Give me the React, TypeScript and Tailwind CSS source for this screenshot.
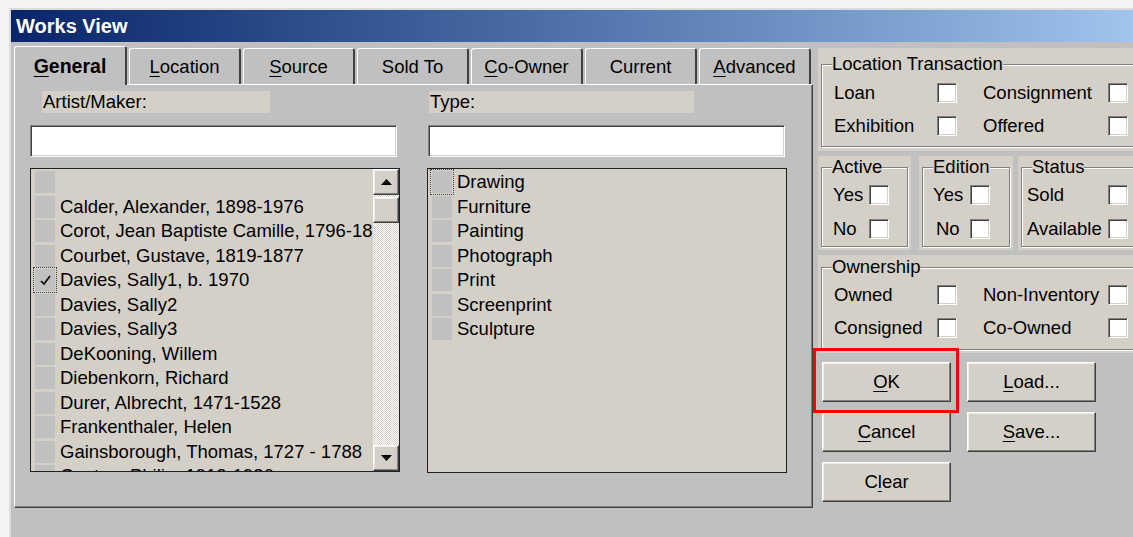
import React from "react";

// text with one underlined access-key letter
function Mn({ text, at }: { text: string; at?: number }) {
  if (at === undefined) return <>{text}</>;
  return (
    <>
      {text.slice(0, at)}
      <span className="underline underline-offset-[3px]">{text[at]}</span>
      {text.slice(at + 1)}
    </>
  );
}

const tabs = [
  { label: "Location", key: 0 },
  { label: "Source", key: 0 },
  { label: "Sold To" },
  { label: "Co-Owner", key: 0 },
  { label: "Current" },
  { label: "Advanced", key: 0 },
];

const artists = [
  "",
  "Calder, Alexander, 1898-1976",
  "Corot, Jean Baptiste Camille, 1796-1875",
  "Courbet, Gustave, 1819-1877",
  "Davies, Sally1, b. 1970",
  "Davies, Sally2",
  "Davies, Sally3",
  "DeKooning, Willem",
  "Diebenkorn, Richard",
  "Durer, Albrecht, 1471-1528",
  "Frankenthaler, Helen",
  "Gainsborough, Thomas, 1727 - 1788",
  "Guston, Philip, 1913-1980",
];

const types = ["Drawing", "Furniture", "Painting", "Photograph", "Print", "Screenprint", "Sculpture"];

function CheckBox() {
  return (
    <span className="block w-[20px] h-[20px] shrink-0 bg-white border border-t-[#808080] border-l-[#808080] border-r-white border-b-white shadow-[inset_1px_1px_0_#404040,inset_-1px_-1px_0_#d4d0c8]" />
  );
}

function Group({
  title,
  height,
  inner,
  children,
}: {
  title: string;
  height: string;
  inner: string;
  children: React.ReactNode;
}) {
  return (
    <fieldset className={"border border-[#808080] shadow-[inset_1px_1px_0_#fff,1px_1px_0_#fff] " + height}>
      <legend className="ml-[10px] px-0 leading-[20px] bg-[#d4d0c8]">{title}</legend>
      <div className={inner}>{children}</div>
    </fieldset>
  );
}

function ListCell({ focus, checked }: { focus?: boolean; checked?: boolean }) {
  return (
    <span
      className={
        "flex items-center justify-center w-[20px] h-[22px] shrink-0 bg-[#c0c0c0] " +
        (focus ? "outline-1 outline-dotted outline-[#404040] outline-offset-[1px]" : "")
      }
    >
      {checked && (
        <svg width="13" height="13" viewBox="0 0 13 13">
          <path d="M2 7 L5 10 L11 2" stroke="#000" strokeWidth="1.6" fill="none" />
        </svg>
      )}
    </span>
  );
}

function Arrow({ up }: { up?: boolean }) {
  return (
    <svg width="11" height="7" viewBox="0 0 11 7">
      <polygon points={up ? "5.5,0 11,6 0,6" : "0,0 11,0 5.5,6"} fill="#000" />
    </svg>
  );
}

const raised =
  "bg-[#d4d0c8] border border-t-white border-l-white border-r-[#404040] border-b-[#404040] shadow-[inset_-1px_-1px_0_#808080,inset_1px_1px_0_#ececec]";

function Button({ text, at }: { text: string; at: number }) {
  return (
    <button className={"w-[129px] h-[40px] flex items-center justify-center text-[18.5px] text-black " + raised}>
      <Mn text={text} at={at} />
    </button>
  );
}

function CheckRow({ a, b }: { a: string; b: string }) {
  return (
    <div className="flex items-center h-[33px]">
      <span className="w-[103px]">{a}</span>
      <CheckBox />
      <span className="w-[125px] ml-[26px]">{b}</span>
      <CheckBox />
    </div>
  );
}

export default function App() {
  return (
    <div className="w-[1133px] h-[537px] overflow-hidden bg-[#f4f4f4] pt-[8px] pl-[9px] font-['Liberation_Sans',Arial,sans-serif] text-[18.5px] text-black">
      <div className="w-[1160px] h-[540px] bg-[#c0c0c0] border-t-2 border-l-2 border-[#dcdcdc]">
        {/* caption */}
        <div className="h-[32px] flex items-center pl-[5px] bg-gradient-to-r from-[#0a246a] to-[#a6caf0] text-white font-bold text-[20px]">
          Works View
        </div>

        <div className="flex">
          {/* tab control */}
          <div className="ml-[3px] w-[799px]">
            <div className="h-[42px] flex items-end">
              <div className="relative z-10 -mb-px w-[113px] h-[39px] flex items-center justify-center pt-[2px] font-bold text-[19.5px] bg-[#c0c0c0] border-t border-l border-white border-r-2 border-r-[#404040] rounded-t-[3px]">
                <Mn text="General" at={0} />
              </div>
              {tabs.map((t) => (
                <div
                  key={t.label}
                  className="ml-[2px] w-[112px] h-[36px] flex items-center justify-center pt-px bg-[#c0c0c0] border-t border-l border-white border-r-2 border-r-[#404040] rounded-t-[3px]"
                >
                  <Mn text={t.label} at={t.key} />
                </div>
              ))}
            </div>

            <div className="h-[424px] border-t border-l border-white border-r border-b border-r-[#404040] border-b-[#404040] shadow-[inset_-1px_-1px_0_#808080] pt-[6px] pl-[15px] flex">
              {/* artist column */}
              <div className="w-[370px]">
                <div className="ml-[12px] w-[228px] h-[22px] leading-[22px] pl-[1px] bg-[#d4d0c8]">Artist/Maker:</div>
                <div className="mt-[12px] w-[367px] h-[32px] bg-white border border-t-[#808080] border-l-[#808080] border-r-white border-b-white shadow-[inset_1px_1px_0_#404040,inset_-1px_-1px_0_#d4d0c8]" />
                <div className="mt-[11px] w-[370px] h-[304px] bg-[#d4d0c8] border border-[#202020] flex">
                  <div className="flex-1 overflow-hidden pt-px">
                    {artists.map((a, i) => (
                      <div key={i} className="h-[24.5px] flex items-center pl-[4px] whitespace-nowrap">
                        <ListCell focus={i === 4} checked={i === 4} />
                        <span className="ml-[5px]">{a}</span>
                      </div>
                    ))}
                  </div>
                  <div className="w-[26px] flex flex-col bg-[repeating-conic-gradient(#ffffff_0_25%,#d4d0c8_0_50%)] bg-[length:2px_2px]">
                    <div className={"h-[26px] flex items-center justify-center " + raised}>
                      <Arrow up />
                    </div>
                    <div className={"mt-[2px] h-[26px] " + raised} />
                    <div className="flex-1" />
                    <div className={"h-[26px] flex items-center justify-center " + raised}>
                      <Arrow />
                    </div>
                  </div>
                </div>
              </div>

              {/* type column */}
              <div className="ml-[27px] w-[360px]">
                <div className="ml-[2px] w-[265px] h-[22px] leading-[22px] pl-[1px] bg-[#d4d0c8]">Type:</div>
                <div className="mt-[12px] ml-px w-[357px] h-[32px] bg-white border border-t-[#808080] border-l-[#808080] border-r-white border-b-white shadow-[inset_1px_1px_0_#404040,inset_-1px_-1px_0_#d4d0c8]" />
                <div className="mt-[11px] w-[360px] h-[305px] bg-[#d4d0c8] border border-[#202020] pt-px">
                  {types.map((t, i) => (
                    <div key={t} className="h-[24.5px] flex items-center pl-[4px]">
                      <ListCell focus={i === 0} />
                      <span className="ml-[5px]">{t}</span>
                    </div>
                  ))}
                </div>
              </div>
            </div>
          </div>

          {/* filters and actions */}
          <div className="ml-[5px] w-[330px]">
            <div className="mt-[6px] h-[103px] bg-[#d4d0c8] pl-[3px] pt-[6px]">
              <Group title="Location Transaction" height="h-[93px]" inner="pl-[12px] pt-[2px]">
                <CheckRow a="Loan" b="Consignment" />
                <CheckRow a="Exhibition" b="Offered" />
              </Group>
            </div>

            <div className="mt-[5px] h-[94px] flex">
              <div className="w-[93px] bg-[#d4d0c8] pl-[3px] pr-[3px] pt-px">
                <Group title="Active" height="h-[90px]" inner="pl-[11px] pt-px">
                  <div className="flex items-center h-[34px]">
                    <span className="w-[36px]">Yes</span>
                    <CheckBox />
                  </div>
                  <div className="flex items-center h-[34px]">
                    <span className="w-[36px]">No</span>
                    <CheckBox />
                  </div>
                </Group>
              </div>
              <div className="ml-[8px] w-[94px] bg-[#d4d0c8] pl-[3px] pr-[3px] pt-px">
                <Group title="Edition" height="h-[90px]" inner="pl-[10px] pt-px">
                  <div className="flex items-center h-[34px]">
                    <span className="w-[37px]">Yes</span>
                    <CheckBox />
                  </div>
                  <div className="flex items-center h-[34px]">
                    <span className="w-[37px] pl-[3px]">No</span>
                    <CheckBox />
                  </div>
                </Group>
              </div>
              <div className="ml-[5px] flex-1 bg-[#d4d0c8] pl-[3px] pt-px">
                <Group title="Status" height="h-[90px]" inner="pl-[5px] pt-px">
                  <div className="flex items-center h-[34px]">
                    <span className="w-[81px]">Sold</span>
                    <CheckBox />
                  </div>
                  <div className="flex items-center h-[34px]">
                    <span className="w-[81px]">Available</span>
                    <CheckBox />
                  </div>
                </Group>
              </div>
            </div>

            <div className="mt-[5px] h-[98px] bg-[#d4d0c8] pl-[3px] pt-[2px]">
              <Group title="Ownership" height="h-[93px]" inner="pl-[12px] pt-px">
                <CheckRow a="Owned" b="Non-Inventory" />
                <CheckRow a="Consigned" b="Co-Owned" />
              </Group>
            </div>

            <div className="relative pl-[4px] pt-[9px] flex flex-col gap-[10px]">
              <div className="flex gap-[16px]">
                <Button text="OK" at={0} />
                <Button text="Load..." at={0} />
              </div>
              <div className="flex gap-[16px]">
                <Button text="Cancel" at={0} />
                <Button text="Save..." at={0} />
              </div>
              <div className="flex">
                <Button text="Clear" at={1} />
              </div>
              {/* highlight around the OK button */}
              <div className="absolute left-[-5px] top-[-5px] w-[146px] h-[65px] border-[3px] border-[#ff0000]" />
            </div>
          </div>
        </div>
      </div>
    </div>
  );
}
